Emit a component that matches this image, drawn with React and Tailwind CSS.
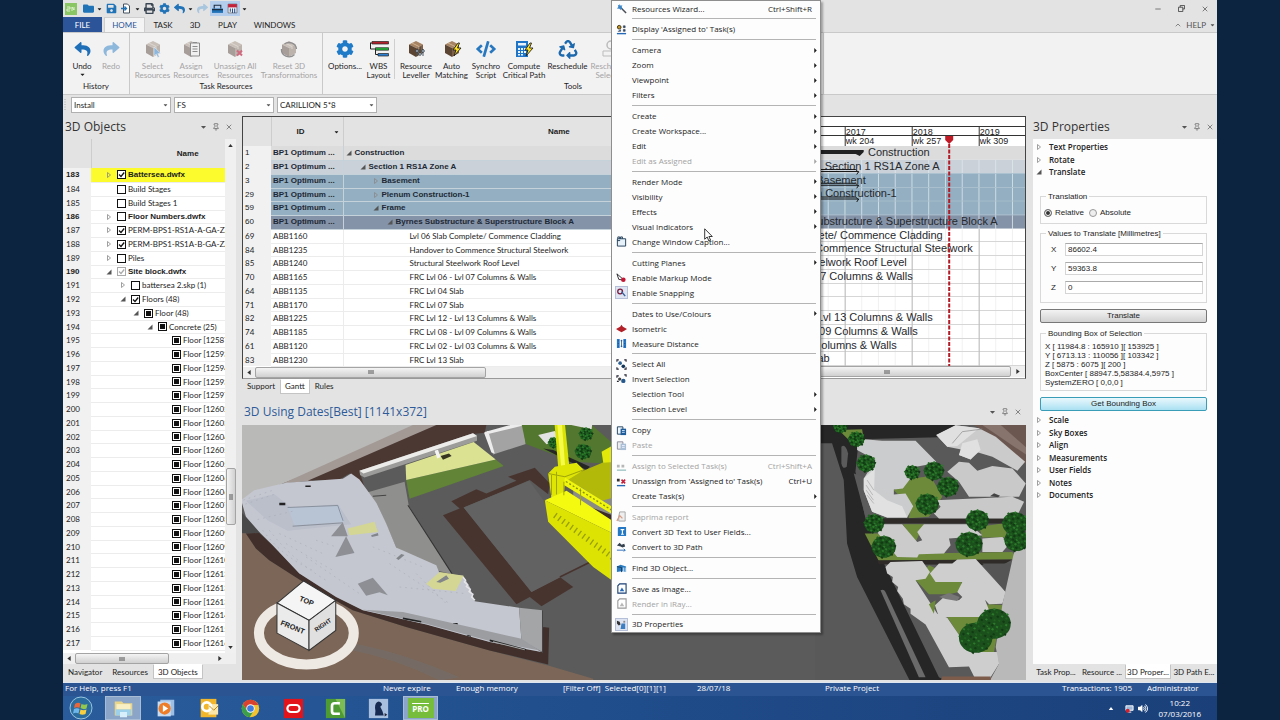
import React from "react";
import { FaReply, FaShare, FaCode, FaRecycle, FaCog, FaFolder, FaSave, FaPrint, FaCaretDown, FaVolumeUp } from "react-icons/fa";
import { X, Pin, Minus, ChevronUp } from "lucide-react";

const UI = "font-['Open_Sans','Noto_Sans',sans-serif]";
const COMPACT = "font-['Lato','Open_Sans',sans-serif]";
const GRID = "font-['Liberation_Sans',Arial,sans-serif]";
const GRID_ROW = COMPACT;

/* ---------- small drawings ---------- */

function Cube({ overlay, faded = true }) {
  return (
    <svg viewBox="0 0 20 18" className="h-[18px] w-5">
      <path d="M3 4.500 10 1l7 3.500-7 3.500z" fill={faded ? "#c9c0ba" : "#a58363"} />
      <path d="M3 4.500 10 8v9l-7-4z" fill={faded ? "#a89e99" : "#5c4432"} />
      <path d="M17 4.500 10 8v9l7-4z" fill={faded ? "#bcb3ad" : "#7d6047"} />
      <path d="M6 3l7 3.500v2.500" fill="none" stroke={faded ? "#ddd6d0" : "#d0b391"} strokeWidth="1" />
      {overlay}
    </svg>
  );
}

const cursorOverlay = <path d="M11 7v9l2.200-2 1.600 3.500 1.500-.7-1.500-3.300h3z" fill="#8db6dd" stroke="#f2f2f2" strokeWidth=".5" />;
const clipOverlay = (
  <g stroke="#8c8c8c" strokeWidth="1">
    <path d="M9.500 3h9v13h-9z" fill="#f0f0f0" />
    <path d="M11.500 6.500h5M11.500 9h5M11.500 11.500h5M12 2.500h4" />
  </g>
);
const crossOverlay = <path d="M12 10.500l5 5m0-5l-5 5" stroke="#cf6a80" strokeWidth="2" />;
const rotateOverlay = <path d="M2.500 9a7.500 7 0 0 0 13 5.500M17.500 9a7.500 7 0 0 0-12-5" fill="none" stroke="#8f8f8f" strokeWidth="1.300" />;
const dotsOverlay = (
  <g fill="#dfe8f2" stroke="#21313f" strokeWidth=".8">
    <path d="M11 9v7M14 7v8M17 9v7" />
    <circle cx="11" cy="11" r="1.300" /><circle cx="14" cy="14" r="1.300" /><circle cx="17" cy="11" r="1.300" />
  </g>
);
const Bolt = ({ x }) => <path d={`M${x + 4} 3l-5 7h3l-2 6 7-8h-3.500l2-5z`} fill="#ffe11f" stroke="#222" strokeWidth=".9" />;

const WbsIcon = () => (
  <svg viewBox="0 0 20 18" className="h-[18px] w-5">
    <path d="M1.500 3v6h5M6.500 9v5.500h3M1 3h3" fill="none" stroke="#222" />
    <path d="M3 1.500h16.500v2.500H3z" fill="#b3202c" stroke="#222" strokeWidth=".7" />
    <path d="M6.500 7.700h13v2.500h-13z" fill="#25b33c" stroke="#222" strokeWidth=".7" />
    <path d="M9 13.500h10.500v2.500H9z" fill="#2d7fd0" stroke="#222" strokeWidth=".7" />
  </svg>
);
const CalcBolt = () => (
  <svg viewBox="0 0 20 18" className="h-[18px] w-5">
    <path d="M2 1h12v16H2z" fill="#1f74c7" />
    <path d="M4 3h8v2.500H4z" fill="#e9f3fc" />
    <path d="M4 8h2v2H4zM7 8h2v2H7zM10 8h2v2h-2zM4 11h2v2H4zM7 11h2v2H7zM10 11h2v2h-2zM4 14h2v1.500H4zM7 14h2v1.500H7z" fill="#e9f3fc" />
    <Bolt x={12} />
  </svg>
);

const MENU_ICONS = {
  wand: <><path d="M5 5l6 6" stroke="#4a4f58" strokeWidth="1.600" /><path d="M4 1l1 2 2-.5-1 2 1.500 1.500-2 .2L5 8 3.800 6.200 1 6l1.500-1.600L2 2l1.500.8z" fill="#3b86c8" /></>,
  assigned: <><circle cx="3.500" cy="3.500" r="2" fill="#c49a2a" stroke="#3b2c0d" /><path d="M5 6v2H2M8 2h2v2H8zM8 6h2v2H8z" fill="#245a9c" stroke="#333" strokeWidth=".6" /><path d="M1 10.500h10" stroke="#2568b8" strokeWidth="1.500" /></>,
  caption: <path d="M1.500 3h9v8h-9zM2 3V1h2v2M5 3V1h2v2M1.500 5h3" fill="#e6f1fa" stroke="#1e3954" />,
  markup: <><path d="M1 2l8 7-6-1z" fill="#fff" stroke="#26262c" /><circle cx="8" cy="8.500" r="2.500" fill="#c31835" /></>,
  snap: <><circle cx="4.500" cy="5" r="2.600" fill="none" stroke="#7b1b3c" strokeWidth="1.400" /><path d="M6 5l4 5" stroke="#38639c" strokeWidth="1.600" /></>,
  iso: <path d="M0 6.500l3-1.500 1.500-1L6 2l1.500 2L9 5l3 1.500-3 2L6 10 3 8.500z" fill="#b32028" />,
  measure: <><path d="M1 1h3v10H1zM8 1h3v10H8z" fill="#2878c8" /><path d="M6 2v8M5 3h2M5 9h2M2 3h1M2 6h1M2 9h1M9 3h1M9 6h1M9 9h1" stroke="#1d456d" strokeWidth=".8" /></>,
  select: <><path d="M1 3V1h2M9 1h2v2M11 9v2H9M3 11H1V9" fill="none" stroke="#223" strokeWidth="1.200" /><circle cx="4.500" cy="4.500" r="2" fill="#2d5e8e" /><circle cx="8" cy="8" r="2" fill="#123456" /></>,
  invert: <><path d="M1 4V2h2M9 1h2v2M1 8h2" fill="none" stroke="#223" strokeWidth="1.200" /><circle cx="4" cy="5.500" r="1.800" fill="#444" /><circle cx="8" cy="7.500" r="2.400" fill="#25588d" /></>,
  copy: <><path d="M1.500 2h6v8h-6z" fill="#eef5fc" stroke="#1c3c5c" /><path d="M5 4h6v7H5z" fill="#1e5c9c" /><path d="M6.500 6h3M6.500 8h3" stroke="#cfe3f5" /></>,
  paste: <><path d="M1.500 2h6v8h-6z" fill="#eee" stroke="#889" /><path d="M5 4h6v7H5z" fill="#a8bfd6" /><path d="M6.500 6h3M6.500 8h3" stroke="#eef" /></>,
  assign: <><path d="M1 4h3v3H1zM6 4h3v3H6z" fill="#b7b7b7" /><path d="M1 10h10" stroke="#9fc3c3" strokeWidth="1.500" /></>,
  unassign: <><path d="M1 3h3v3H1z" fill="#333" /><path d="M6 4l4 4m0-4l-4 4" stroke="#c4203c" strokeWidth="1.700" /><path d="M1 10.500h9" stroke="#2568b8" strokeWidth="1.500" /></>,
  report: <><path d="M4 1h6v10H3V6z" fill="#eee" stroke="#a4a4a4" /><path d="M1 11l3-6 3 3" fill="none" stroke="#d79b82" strokeWidth="1.400" /></>,
  text: <><path d="M3 1h8v10H2V2z" fill="#2478c4" /><path d="M5 4h4M7 4v5M5.500 9h3" stroke="#fff" strokeWidth="1.300" /></>,
  path: <><path d="M1 5l3-3 2 2 3-1 1 3-3 1-2-1z" fill="#35424f" /><path d="M1 10h9l-1.500-1.500M10 10l-1.500 1.500" stroke="#2568b8" fill="none" /></>,
  find: <><path d="M1 5l4-2 6 2v6l-5-1-5 1z" fill="#2a7abf" /><path d="M1 5l5 1v5" stroke="#163c5e" fill="none" /><path d="M8 6v5M10 6v5" stroke="#d5e8f8" /></>,
  image: <><path d="M4 1h7v10H2V3z" fill="#fff" stroke="#1b3f74" strokeWidth="1.200" /><path d="M4 9l2.500-4L9 9z" fill="#2568b8" /></>,
  imageOff: <><path d="M4 1h7v10H2V3z" fill="#fff" stroke="#999" strokeWidth="1.200" /><path d="M4 9l2.500-4L9 9z" fill="#b8b8b8" /></>,
  props: <><path d="M1 2l3 1 1 3-2 1-2-2z" fill="#333" /><path d="M6 5h4v6H5z" fill="#3c7dc4" /><path d="M8 2h2v2H8z" fill="#888" /></>,
};

/* ---------- context menu ---------- */

const MENU = [
  [["Resources Wizard...", { k: "Ctrl+Shift+R", i: "wand" }]],
  [["Display 'Assigned to' Task(s)", { i: "assigned" }]],
  [["Camera", { s: 1 }], ["Zoom", { s: 1 }], ["Viewpoint", { s: 1 }], ["Filters", { s: 1 }]],
  [["Create", { s: 1 }], ["Create Workspace...", { s: 1 }], ["Edit", { s: 1 }], ["Edit as Assigned", { s: 1, d: 1 }]],
  [["Render Mode", { s: 1 }], ["Visibility", { s: 1 }], ["Effects", { s: 1 }], ["Visual Indicators", { s: 1 }], ["Change Window Caption...", { i: "caption" }]],
  [["Cutting Planes", { s: 1 }], ["Enable Markup Mode", { i: "markup" }], ["Enable Snapping", { i: "snap", on: 1 }]],
  [["Dates to Use/Colours", { s: 1 }], ["Isometric", { i: "iso" }], ["Measure Distance", { i: "measure" }]],
  [["Select All", { i: "select" }], ["Invert Selection", { i: "invert" }], ["Selection Tool", { s: 1 }], ["Selection Level", { s: 1 }]],
  [["Copy", { i: "copy" }], ["Paste", { i: "paste", d: 1 }]],
  [["Assign to Selected Task(s)", { i: "assign", k: "Ctrl+Shift+A", d: 1 }], ["Unassign from 'Assigned to' Task(s)", { i: "unassign", k: "Ctrl+U" }], ["Create Task(s)", { s: 1 }]],
  [["Saprima report", { i: "report", d: 1 }], ["Convert 3D Text to User Fields...", { i: "text" }], ["Convert to 3D Path", { i: "path" }]],
  [["Find 3D Object...", { i: "find" }]],
  [["Save as image...", { i: "image" }], ["Render in iRay...", { i: "imageOff", d: 1 }]],
  [["3D Properties", { i: "props", on: 1 }]],
];

function ContextMenu() {
  return (
    <div role="menu" className="absolute left-[611px] top-0 z-10 flex h-[633px] w-[210px] flex-col border border-[#8e8e8e] bg-[#fdfdfd] shadow-[2px_2px_2px_rgba(0,0,0,0.3)]">
      {MENU.map((group, g) => (
        <React.Fragment key={g}>
          {g > 0 && (
            <div role="separator" className="flex flex-1 items-center pl-5 pr-1">
              <div className="h-px w-full bg-[#b4b4b4]" />
            </div>
          )}
          {group.map(([label, o]) => (
            <button key={label} role="menuitem" disabled={!!o.d} className={"flex h-[15px] items-center pl-[3px] pr-[3px] text-left text-[8px] leading-none " + (o.d ? "text-[#a3a3a3]" : "text-[#1c1c1c]")}>
              <span className={"mr-1 flex h-[13px] w-[13px] items-center justify-center " + (o.on ? "border border-[#b5bfd8] bg-[#dfe4f2]" : "")}>
                {o.i && <svg viewBox="0 0 12 12" className="h-[11px] w-[11px]">{MENU_ICONS[o.i]}</svg>}
              </span>
              <span className="flex-1 whitespace-nowrap">{label}</span>
              {o.k && <span className="pr-[5px]">{o.k}</span>}
              {o.s && <svg viewBox="0 0 3 6" className="h-[5px] w-[3px]"><path d="M0 0l3 3-3 3z" fill="currentColor" /></svg>}
            </button>
          ))}
        </React.Fragment>
      ))}
      <svg viewBox="0 0 9 14" className="absolute left-[92px] top-[227px] h-[14px] w-[9px]">
        <path d="M.7.8v10.400l2.500-2.200 1.700 4 1.700-.8-1.700-3.700h3.400z" fill="#fff" stroke="#222" strokeWidth=".9" />
      </svg>
    </div>
  );
}

/* ---------- ribbon ---------- */

function RibbonButton({ icon, lines, width, disabled, drop }) {
  return (
    <button disabled={disabled} className={`flex ${width} flex-col items-center pt-[7px] text-[8px] leading-[9px] ${COMPACT} ` + (disabled ? "text-[#a4a4a4]" : "text-[#1e1e1e]")}>
      <span className="mb-1 flex h-[18px] items-center">{icon}</span>
      {lines.map((l) => <span key={l} className="whitespace-nowrap">{l}</span>)}
      {drop && <FaCaretDown className="h-[7px] w-[5px]" />}
    </button>
  );
}

function Group({ label, width, children }) {
  return (
    <div className={`flex ${width} flex-col border-r border-[#c9c9c9]`}>
      <div className="flex flex-1 pl-1">{children}</div>
      <div className={"h-[14px] text-center text-[8px] leading-[13px] " + COMPACT}>{label}</div>
    </div>
  );
}

function QuickBar() {
  const c = "h-[11px] w-[11px] text-[#2173b8]";
  return (
    <div className="flex h-[17px] items-center">
      <svg viewBox="0 0 12 12" className="ml-0.5 h-3 w-3"><path d="M0 0h12v12H0z" fill="#8bc665" /><path d="M2 4h3v2H2v2h3M7 8V4l2 3V4" stroke="#dff0d2" fill="none" /></svg>
      <FaFolder className={c + " ml-[6px]"} />
      <FaCaretDown className="ml-[3px] h-[6px] w-[5px]" />
      <FaSave className={c + " ml-[4px]"} />
      <svg viewBox="0 0 10 11" className="ml-[4px] h-[11px] w-[10px]"><path d="M2.500 1h4l2 2v7h-6z" fill="#fff" stroke="#44515e" /><path d="M0 5.500h5M3.500 3.500l2 2-2 2" stroke="#2173b8" fill="none" strokeWidth="1.300" /></svg>
      <FaCaretDown className="ml-[4px] h-[6px] w-[5px]" />
      <FaPrint className="ml-[4px] h-[11px] w-[11px] text-[#3a4653]" />
      <FaCog className={c + " ml-[4px]"} />
      <FaReply className={c + " ml-[4px]"} />
      <FaCaretDown className="ml-[3px] h-[6px] w-[5px]" />
      <FaShare className="ml-[4px] h-[11px] w-[11px] text-[#a9c6df]" />
      <span className="ml-[2px] flex h-[15px] w-[30px] items-center justify-around bg-[#b5cdec]">
        <svg viewBox="0 0 10 10" className="h-[11px] w-[11px]"><path d="M0 5h10v4H0z" fill="#2173b8" /><path d="M2 5V2h6v3M0 6h10" stroke="#1b2d41" fill="none" /></svg>
        <svg viewBox="0 0 10 10" className="h-[11px] w-[11px]"><path d="M1 1h8v8H1z" fill="#f4f6fa" stroke="#555" strokeWidth=".6" /><path d="M1 1h8v3H1z" fill="#c3223b" /><path d="M3 5v3M5 5v4M7 5v4" stroke="#2a4f88" /></svg>
      </span>
      <FaCaretDown className="ml-0.5 h-[6px] w-[5px]" />
      <div className="ml-auto flex items-center gap-4 pr-2 text-[#444]">
        <Minus className="h-[8px] w-[8px]" />
        <svg viewBox="0 0 8 8" className="h-[7px] w-[7px]"><path d="M2.500 2.500v-2h5v4h-2M.5 2.500h5v5h-5z" fill="none" stroke="#444" /></svg>
        <X className="h-[8px] w-[8px]" />
      </div>
    </div>
  );
}

function Ribbon() {
  const tab = "flex items-center justify-center text-[8px] leading-none " + COMPACT;
  return (
    <header>
      <QuickBar />
      <nav className="flex h-[15px] text-[#222]">
        <button className={tab + " w-[39px] bg-[#2b5499] text-white"}>FILE</button>
        <button className={tab + " ml-[2px] w-[41px] border border-b-0 border-[#cfcfcf] bg-[#f4f4f4] text-[#2b5499]"}>HOME</button>
        <button className={tab + " w-[36px]"}>TASK</button>
        <button className={tab + " w-[28px]"}>3D</button>
        <button className={tab + " w-[37px]"}>PLAY</button>
        <button className={tab + " w-[57px]"}>WINDOWS</button>
        <button className={tab + " ml-auto gap-1 pr-0.5 text-[#555]"}><ChevronUp className="h-[8px] w-[8px]" />HELP<FaCaretDown className="h-[6px] w-[5px]" /></button>
      </nav>
      <div className="flex h-[63px] overflow-hidden border-y border-[#c9c9c9] bg-[#f3f2f3]">
        <Group label="History" width="w-[67px]">
          <RibbonButton width="w-[30px]" lines={["Undo"]} drop icon={<FaReply className="h-4 w-[19px] text-[#1f6fb8]" />} />
          <RibbonButton width="w-[28px]" lines={["Redo"]} disabled icon={<FaShare className="h-4 w-[19px] text-[#8db8dc]" />} />
        </Group>
        <Group label="Task Resources" width="w-[193px]">
          <RibbonButton width="w-[37px]" lines={["Select", "Resources"]} disabled icon={<Cube overlay={cursorOverlay} />} />
          <RibbonButton width="w-[40px]" lines={["Assign", "Resources"]} disabled icon={<Cube overlay={clipOverlay} />} />
          <RibbonButton width="w-[48px]" lines={["Unassign All", "Resources"]} disabled icon={<Cube overlay={crossOverlay} />} />
          <RibbonButton width="w-[60px]" lines={["Reset 3D", "Transformations"]} disabled icon={<Cube overlay={rotateOverlay} />} />
        </Group>
        <Group label="Tools" width="w-[501px]">
          <RibbonButton width="w-[36px]" lines={["Options..."]} icon={<FaCog className="h-[18px] w-[18px] text-[#1f7ac8]" />} />
          <RibbonButton width="w-[31px]" lines={["WBS", "Layout"]} icon={<WbsIcon />} />
          <div className="mt-[6px] h-10 w-px bg-[#cfcfcf]" />
          <div className="w-[4px]" />
          <RibbonButton width="w-[34px]" lines={["Resource", "Leveller"]} icon={<Cube faded={false} overlay={dotsOverlay} />} />
          <RibbonButton width="w-[37px]" lines={["Auto", "Matching"]} icon={<Cube faded={false} overlay={<Bolt x={12} />} />} />
          <RibbonButton width="w-[32px]" lines={["Synchro", "Script"]} icon={<FaCode className="h-[18px] w-5 text-[#2878c0]" />} />
          <RibbonButton width="w-[44px]" lines={["Compute", "Critical Path"]} icon={<CalcBolt />} />
          <RibbonButton width="w-[43px]" lines={["Reschedule"]} icon={<FaRecycle className="h-[19px] w-[20px] text-[#1d69ad]" />} />
          <RibbonButton width="w-[43px]" lines={["Reschedule", "Selected"]} disabled icon={<svg viewBox="0 0 20 18" className="h-[18px] w-5"><circle cx="10" cy="5" r="4" fill="none" stroke="#bbb" strokeWidth="1.500" /><path d="M2 11h16v5H2z" fill="none" stroke="#bbb" /></svg>} />
        </Group>
      </div>
      <div className="flex h-5 items-center gap-[3px] pl-px">
        <svg viewBox="0 0 3 12" className="mr-px h-3 w-[3px]"><path d="M1 0v12" stroke="#aaa" strokeDasharray="1 1.500" /></svg>
        {[["Discipline", "Install"], ["Link type", "FS"], ["Calendar", "CARILLION 5*8"]].map(([name, v]) => (
          <label key={name} className="relative flex">
            <select aria-label={name} className={"h-4 w-[100px] appearance-none border border-[#b0b0b0] bg-white pl-[2px] text-[8px] leading-none " + COMPACT}>
              <option>{v}</option>
            </select>
            <FaCaretDown className="pointer-events-none absolute right-[3px] top-[5px] h-[6px] w-[5px] text-[#555]" />
          </label>
        ))}
      </div>
    </header>
  );
}

/* ---------- shared parts ---------- */

const PanelButtons = () => (
  <span className="flex items-center gap-[5px] text-[#555]">
    <FaCaretDown className="h-[8px] w-[7px]" />
    <Pin className="h-[8px] w-[8px]" />
    <X className="h-[8px] w-[8px]" />
  </span>
);

function Twisty({ open }) {
  return open ? (
    <svg viewBox="0 0 6 6" className="h-[6px] w-[6px] shrink-0"><path d="M5.500.5v5h-5z" fill="#555" /></svg>
  ) : (
    <svg viewBox="0 0 6 6" className="h-[6px] w-[6px] shrink-0"><path d="M1.500.5v5l3-2.500z" fill="none" stroke="#888" strokeWidth=".8" /></svg>
  );
}

function HScroll({ thumb, pad = "" }) {
  return (
    <div className={"flex h-[11px] items-center justify-between bg-[#efefef] " + pad}>
      <svg viewBox="0 0 4 6" className="mx-[4px] h-[5px] w-[4px]"><path d="M4 0v6L0 3z" fill="#333" /></svg>
      <div className="flex h-full flex-1">
        <div className={`flex h-full ${thumb} items-center justify-center rounded-xs border border-[#a4a4a4] bg-linear-to-b from-[#f4f4f4] to-[#d0d0d0]`}>
          <svg viewBox="0 0 6 4" className="h-1 w-[6px]"><path d="M1 0v4M3 0v4M5 0v4" stroke="#555" /></svg>
        </div>
      </div>
      <svg viewBox="0 0 4 6" className="mx-[5px] h-[5px] w-[4px]"><path d="M0 0v6l4-3z" fill="#333" /></svg>
    </div>
  );
}

/* ---------- 3D Objects ---------- */

const FLOORS = ["12587", "12593", "12594", "12593", "12597", "12602", "12603", "12604", "12605", "12605", "12606", "12606", "12607", "12608", "12609", "12609", "12610", "12613", "12613", "12613", "12614", "12615", "12616"];
const TREE = [
  [183, "Battersea.dwfx", 0, "c", "x", true],
  [184, "Build Stages", 0, "", ""],
  [185, "Build Stages 1", 0, "", ""],
  [186, "Floor Numbers.dwfx", 0, "", "x", true],
  [187, "PERM-BPS1-RS1A-A-GA-ZZ-", 0, "c", "x"],
  [188, "PERM-BPS1-RS1A-B-GA-ZZ-", 0, "c", "x"],
  [189, "Piles", 0, "", "x"],
  [190, "Site block.dwfx", 0, "g", "o", true],
  [191, "battersea 2.skp (1)", 1, "", "x"],
  [192, "Floors (48)", 1, "c", "o"],
  [193, "Floor (48)", 2, "f", "o"],
  [194, "Concrete (25)", 3, "f", "o"],
  ...FLOORS.map((f, i) => [195 + i, "Floor [" + f, 4, "f", ""]),
];
const INDENT = ["pl-[15px]", "pl-[29px]", "pl-[42px]", "pl-[56px]", "pl-[70px]"];

function Check({ id, state }) {
  return (
    <span className="relative mx-[2px] ml-[5px] flex h-[9px] w-[9px] shrink-0">
      <input id={id} type="checkbox" defaultChecked={state !== ""} className={"h-[9px] w-[9px] appearance-none border bg-white " + (state === "g" ? "border-[#aaa]" : "border-[#111]")} />
      <svg viewBox="0 0 9 9" className="pointer-events-none absolute left-0 top-0 h-[9px] w-[9px]">
        {(state === "c" || state === "g") && <path d="M2 4.500l2 2 3.200-4" fill="none" stroke={state === "g" ? "#aaa" : "#111"} strokeWidth="1.300" />}
        {state === "f" && <path d="M2 2h5v5H2z" fill="#111" />}
      </svg>
    </span>
  );
}

function ObjectsPanel() {
  return (
    <aside className="flex w-[173px] shrink-0 flex-col">
      <div className="flex h-6 items-center justify-between pl-0.5 pr-[3px]">
        <h2 className="text-[12px] text-[#333]">3D Objects</h2>
        <PanelButtons />
      </div>
      <div className="flex flex-1">
        <div className="w-[162px] overflow-hidden bg-white">
          <table className={"w-full table-fixed border-collapse text-[8px] leading-none " + GRID}>
            <colgroup><col className="w-[28px]" /><col /></colgroup>
            <thead>
              <tr className="h-[29px] bg-[#e3e3e3]">
                <td className="border-r border-[#cdcdcd] p-0" />
                <th className="p-0 pl-[59px] text-center">Name</th>
              </tr>
            </thead>
            <tbody>
              {TREE.map(([n, name, lvl, chk, tw, bold], i) => (
                <tr key={n} className={(i % 4 === 3 ? "h-[13px] " : "h-[14px] ") + (bold ? "font-bold" : GRID_ROW)}>
                  <td className="bg-[#f1f1f1] p-0 pl-[3px]">{n}</td>
                  <td className={"overflow-hidden border-b border-[#ececec] p-0 " + (i === 0 ? "bg-[#fbfb2e]" : "")}>
                    <div className={"flex items-center " + INDENT[lvl]}>
                      <span className="flex w-[6px] shrink-0">{tw && <Twisty open={tw === "o"} />}</span>
                      <Check id={"o" + n} state={chk} />
                      <label htmlFor={"o" + n} className="whitespace-nowrap">{name}</label>
                    </div>
                  </td>
                </tr>
              ))}
            </tbody>
          </table>
        </div>
        <div className="flex w-[11px] flex-col items-center bg-[#f0f0f0]">
          <svg viewBox="0 0 6 4" className="mt-[5px] h-[3px] w-[5px]"><path d="M0 4h6L3 0z" fill="#333" /></svg>
          <div className="flex-[321]" />
          <div className="flex h-[57px] w-[10px] items-center justify-center rounded-xs border border-[#a4a4a4] bg-linear-to-r from-[#f4f4f4] to-[#d0d0d0]">
            <svg viewBox="0 0 4 6" className="h-[6px] w-1"><path d="M0 1h4M0 3h4M0 5h4" stroke="#555" /></svg>
          </div>
          <div className="flex-[121]" />
          <svg viewBox="0 0 6 4" className="mb-1 h-[3px] w-[5px]"><path d="M0 0h6L3 4z" fill="#333" /></svg>
        </div>
      </div>
      <HScroll thumb="w-[68%]" pad="pr-[9px]" />
      <Tabs items={["Navigator", "Resources", "3D Objects"]} active={2} />
    </aside>
  );
}

function Tabs({ items, active, fill }) {
  return (
    <div role="tablist" className={"flex h-[18px] items-start text-[8px] leading-none text-[#222] " + COMPACT}>
      {items.map((t, i) => (
        <button key={t} role="tab" aria-selected={i === active} className={(fill ? "flex-1 " : "px-1 ") + "h-[15px] whitespace-nowrap border " + (i === active ? "border-[#c4c4c4] border-t-white bg-white" : "border-transparent")}>{t}</button>
      ))}
    </div>
  );
}

/* ---------- Gantt ---------- */

const TASKS = [
  [1, "BP1 Optimum ...", "Construction", 0, "o", "bg-[#dcdcdc]"],
  [2, "BP1 Optimum ...", "Section 1 RS1A Zone A", 1, "o", "bg-[#cad1d8]"],
  [3, "BP1 Optimum ...", "Basement", 2, "x", "bg-[#93afc1]"],
  [29, "BP1 Optimum ...", "Plenum Construction-1", 2, "x", "bg-[#93afc1]"],
  [59, "BP1 Optimum ...", "Frame", 2, "o", "bg-[#93afc1]"],
  [60, "BP1 Optimum ...", "Byrnes Substructure & Superstructure Block A", 3, "o", "bg-[#8593a8]"],
  [69, "ABB1160", "Lvl 06 Slab Complete/ Commence Cladding"],
  [84, "ABB1235", "Handover to Commence Structural Steelwork"],
  [85, "ABB1240", "Structural Steelwork Roof Level"],
  [70, "ABB1165", "FRC Lvl 06 - Lvl 07 Columns & Walls"],
  [64, "ABB1135", "FRC Lvl 04 Slab"],
  [71, "ABB1170", "FRC Lvl 07 Slab"],
  [82, "ABB1225", "FRC Lvl 12 - Lvl 13 Columns & Walls"],
  [74, "ABB1185", "FRC Lvl 08 - Lvl 09 Columns & Walls"],
  [61, "ABB1120", "FRC Lvl 02 - Lvl 03 Columns & Walls"],
  [83, "ABB1230", "FRC Lvl 13 Slab"],
];
const TASK_INDENT = ["pl-[2px]", "pl-[16px]", "pl-[29px]", "pl-[43px]", "pl-[57px]"];
const CHART_LABELS = [
  [929, "Construction"], [939, "Section 1 RS1A Zone A"], [865, "Basement"], [896, "Plenum Construction-1"], null,
  [997, "Byrnes Substructure & Superstructure Block A"], [942, "Lvl 06 Slab Complete/ Commence Cladding"],
  [972, "Handover to Commence Structural Steelwork"], [906, "Structural Steelwork Roof Level"], [912, "FRC Lvl 06 - Lvl 07 Columns & Walls"],
  null, null, [932, "FRC Lvl 12 - Lvl 13 Columns & Walls"], [917, "FRC Lvl 08 - Lvl 09 Columns & Walls"], [896, "FRC Lvl 02 - Lvl 03 Columns & Walls"], [829, "FRC Lvl 13 Slab"],
];
const ROW_FILL = ["#dcdcdc", "#cad1d8", "#93afc1", "#93afc1", "#93afc1", "#8593a8"];

function Chart() {
  const rowY = (i) => 146 + i * 13.75;
  const months = Array.from({ length: 16 }, (_, i) => 760.5 + i * 16.75);
  return (
    <svg viewBox="751 117 273 249" preserveAspectRatio="xMaxYMin meet" className="block h-[249px] w-full bg-white" fontFamily="'Liberation Sans', Arial, sans-serif">
      {ROW_FILL.map((f, i) => <rect key={i} x="740" y={rowY(i)} width="290" height="13.800" fill={f} />)}
      {months.map((x) => <path key={x} d={`M${x} 160v69`} stroke="#dfe8ee" strokeWidth=".8" />)}
      {months.map((x) => <path key={"b" + x} d={`M${x} 229v137`} stroke="#eeeeee" strokeWidth=".8" />)}
      <path d="M740 173.500h290M740 187.500h290M740 201h290M740 215h290" stroke="#a9c0ce" strokeWidth=".8" />
      {TASKS.map((_, i) => i > 5 && <path key={i} d={`M740 ${Math.round(rowY(i + 1)) - 0.5}h290`} stroke="#d6d6d6" />)}
      <path d="M844.500 229v137M911.500 229v137M978.500 229v137" stroke="#bcbcbc" />
      <path d="M740 126.500h290M740 135.500h290M844.500 127v19M911.500 127v19M978.500 127v19" stroke="#333" />
      <g fontSize="9" fill="#222">
        {[["2017", "wk 204", 845], ["2018", "wk 257", 912], ["2019", "wk 309", 979]].map(([y, w, x]) => (
          <g key={y}><text x={x} y="135">{y}</text><text x={x} y="144">{w}</text></g>
        ))}
      </g>
      <path d="M760 150h103v2l-4 4-4-2h-95z" fill="#222" />
      {[2, 3, 4].map((i) => <path key={i} d={`M760 ${rowY(i) - 2}h98l-2 3M760 ${rowY(i) - 4}h95l3 3`} fill="none" stroke="#1a1a1a" />)}
      <g fontSize="11" fill="#26292e" textAnchor="end">
        {CHART_LABELS.map((l, i) => l && <text key={i} x={l[0]} y={rowY(i) + 10}>{l[1]}</text>)}
      </g>
      <path d="M944.500 136h8v4l-4 4-4-4z" fill="#c01a26" />
      <path d="M948.500 144v222" stroke="#b31a26" strokeWidth="2" strokeDasharray="4 1.500" />
    </svg>
  );
}

function GanttPanel() {
  return (
    <section className="mt-px border border-[#444] border-b-[#999] bg-white">
      <div className="flex">
        <div className="w-[65%] border-r border-[#777]">
          <table className={"w-full table-fixed border-collapse text-[8px] leading-none " + GRID}>
            <colgroup><col className="w-[28px]" /><col className="w-[72px]" /><col /></colgroup>
            <thead>
              <tr className="h-[29px] bg-[#e3e3e3]">
                <td className="border-r border-[#cdcdcd] p-0" />
                <th className="border-r border-[#cdcdcd] p-0"><div className="flex items-center pl-[25px] pr-1"><span className="flex-1 text-left">ID</span><FaCaretDown className="h-[6px] w-[5px]" /></div></th>
                <th className="p-0 pl-[24px]">Name</th>
              </tr>
            </thead>
            <tbody>
              {TASKS.map(([n, id, name, lvl = 4, tw, bg], i) => (
                <tr key={n} className={(i % 4 === 3 ? "h-[13px] " : "h-[14px] ") + (bg ? "" : GRID_ROW)}>
                  <td className="bg-[#f1f1f1] p-0 pl-[2px]">{n}</td>
                  <td className={"overflow-hidden whitespace-nowrap border-b border-r p-0 pl-[2px] " + (bg ? bg + " border-[#c6d2da] font-bold text-[#1e2936]" : "border-[#ececec]")}>{id}</td>
                  <td className={"border-b p-0 " + (bg ? bg + " border-[#c6d2da] font-bold text-[#1e2936]" : "border-[#ececec]")}>
                    <div className={"flex items-center whitespace-nowrap " + TASK_INDENT[lvl]}>
                      <span className="mr-[3px] flex w-[6px]">{tw && <Twisty open={tw === "o"} />}</span>{name}
                    </div>
                  </td>
                </tr>
              ))}
            </tbody>
          </table>
          <HScroll thumb="w-[48%]" />
        </div>
        <div className="min-w-0 flex-1">
          <Chart />
          <HScroll thumb="w-full" />
        </div>
      </div>
    </section>
  );
}

/* ---------- 3D view ---------- */

function Tree({ x, y, r = 34 }) {
  const dots = Array.from({ length: 42 }, (_, i) => {
    const a = i * 2.4;
    const d = Math.sqrt(i / 42) * r * 1.02;
    return [x + Math.cos(a) * d, y + Math.sin(a) * d * 0.92, i % 3];
  });
  return (
    <g>
      <ellipse cx={x} cy={y} rx={r} ry={r * 0.9} fill="#1b4f1c" />
      {dots.map(([cx, cy, k], i) => <path key={i} d={`M${cx - 4} ${cy}l4-4 5 3-3 5z`} fill={["#2c7a2b", "#123a14", "#1f611f"][k]} />)}
    </g>
  );
}

function Scene() {
  return (
    <svg viewBox="6 15 2352 765" preserveAspectRatio="xMidYMid slice" className="mb-[2px] block min-h-[250px] w-full flex-1" fontFamily="'Liberation Sans', Arial, sans-serif">
      <rect x="0" y="0" width="2400" height="800" fill="#5b5b5b" />
      <path d="M0 0L620 0 545 30 130 190 0 245Z" fill="#b9b9b7" />
      <path d="M520 15L600 15 215 182 130 190Z" fill="#a39a96" />
      <path d="M590 15L740 15 735 38 700 42 360 155 380 215 330 160 300 178 205 182Z" fill="#4b3833" />
      <path d="M0 338L20 340 50 385 90 420 200 490 340 570 500 620 750 690 925 735 1060 775 1060 800 0 800Z" fill="#7c6657" />
      <path d="M350 670Q500 700 660 770L600 780Q470 715 340 690Z" fill="#746e6a" opacity=".7" />
      <path d="M20 340L60 338 100 375 180 460 290 530 370 570 560 612 750 665 905 695 910 620 928 622 925 732 750 690 500 620 340 570 200 490 90 420 50 385Z" fill="#402f2a" />

      <path d="M360 152L700 40 712 48 712 62 375 172 362 165Z" fill="#9c9c9a" />
      <path d="M360 152L700 40 712 48 372 160Z" fill="#ececea" />
      <path d="M735 38L850 15 858 72 760 103Z" fill="#a3a3a3" />
      <path d="M733 38L745 32 765 100 755 97ZM735 36L830 10 856 15 745 42Z" fill="#ececec" />
      <path d="M845 10L1050 10 1118 70 1095 130 1000 125 858 72Z" fill="#54772f" />
      <path d="M895 45L945 33 962 55 920 73ZM980 12L1057 12 1055 28Z" fill="#e2e2e2" />
      <path d="M910 85L940 90 1050 140 1040 150Z" fill="#252525" />
      <path d="M500 180L768 118 792 138 510 236Z" fill="#618437" />
      <path d="M498 135L702 66 768 118 500 180Z" fill="#dbe393" />
      <path d="M585 92l10-3 8 22-10 4z" fill="#f4f4f4" /><path d="M603 108l25-8 8 8-26 11z" fill="#37351f" />
      <path d="M380 218L495 185 508 258 637 462 590 450 470 382 412 250Z" fill="#8f8f8d" />
      <path d="M400 228l40-3" stroke="#444" strokeWidth="3" />
      <path d="M505 255L637 460" stroke="#333" strokeWidth="3" />
      <path d="M635 243L710 207 740 220 830 182 805 170 885 143 930 190 925 222 870 180 672 262 875 515 960 470 1000 500 905 558 870 530 830 552 610 285 660 265Z" fill="#48342f" />
      <path d="M672 262L868 182 1048 427 875 515Z" fill="#626262" />
      <path d="M960 470L1048 427" stroke="#48342f" strokeWidth="5" />
      <path d="M0 270L20 290 66 338 0 338Z" fill="#494949" />

      <path d="M6 240L45 210 140 188 310 176 335 160 360 178 412 250 440 310 470 382 590 435 600 460 670 466 690 500 705 543 838 562 845 660 905 695 750 665 560 612 370 570 290 530 180 460 100 375 60 335 20 290Z" fill="#c5c7d0" />
      <path d="M20 242L105 222 155 262 295 252 335 312 145 332 85 300Z" fill="#b3b9c7" opacity=".6" />
      <path d="M145 262L300 257 315 305 165 316Z" fill="#b8c3d4" />
      <g stroke="#a9adb9" strokeWidth="2" fill="none" strokeDasharray="5 12">
        <path d="M12 240l90-30M18 252l88-30M55 298l110-26M70 330q60 80 150 120M90 330q70 90 170 150M120 340l130 60M140 370l140 80M200 410l160 110M230 360l60 20M400 380l150 60M480 500l200 20M530 460l90 90M450 430l180 120" />
      </g>
      <path d="M145 262l150-6 16 46M160 318l150-10" stroke="#717985" fill="none" strokeWidth="2" />
      <path d="M275 348L310 306 325 348ZM288 410L320 348 345 398ZM355 490L400 472 445 525 420 516 380 526Z" fill="#8d8f95" />
      <path d="M325 325L405 305 415 335 330 345ZM560 490L600 455 672 466 648 512 580 505Z" fill="#d3d793" />
      <path d="M590 485l30-20 8 10-26 12zM470 415l15-14 10 3-18 15zM395 345l20-7 2 8-20 4z" fill="#82858a" />
      <path d="M120 248h18v7h-18zM198 196h16v5h-16zM680 645l14-4v8zM640 608h14v6h-14z" fill="#222" />
      <path d="M670 470l8 10-4 5 10 8-4 6 12 8-4 7 12 8-4 8 10 10" stroke="#e6e6ea" strokeWidth="4" fill="none" />
      <path d="M838 562L908 570 908 695 845 660Z" fill="#a3a5a7" />
      <path d="M370 568L490 575 700 622 845 655 900 690 750 662 560 610Z" fill="#9b9da1" />
      <path d="M490 594l55 10M750 660l108 28" stroke="#222" strokeWidth="5" /><path d="M760 664l95 24" stroke="#eee" strokeWidth="2" />
      <path d="M908 570v128" stroke="#444" strokeWidth="3" />
      <Tree x={1038} y={42} r={20} /><Tree x={1030} y={95} r={24} /><Tree x={942} y={68} r={16} />

      <path d="M1000 175L1130 200 1130 330 1000 230Z" fill="#8b8b86" />
      <path d="M975 175L1130 110 1130 230 1085 242 1030 205Z" fill="#b3b908" />
      <path d="M1085 95L1130 70 1130 125 1090 128Z" fill="#e2e90a" />
      <path d="M1035 255L1130 290 1130 330 1060 285Z" fill="#3c2b26" />
      <path d="M944 10L975 10 988 135 955 142Z" fill="#dbe206" />
      <path d="M952 10L966 10 976 140 964 142Z" fill="#f6fb4a" />
      <path d="M925 160L945 140 1010 128 1032 150 975 185 972 222 935 236Z" fill="#dfe606" />
      <path d="M975 172L1130 268 1130 290 972 195Z" fill="#f0f70c" />
      <path d="M915 240L980 212 1130 310 1130 345Z" fill="#f4fb10" />
      <path d="M915 240L1130 345 1130 490 1060 440 925 305Z" fill="#dde404" />
      <path d="M935 165v60M950 155v68M972 185v40M1022 205v50M925 160l50 10 55-20" stroke="#a0a60a" strokeWidth="3" fill="none" />
      <path d="M978 184l150 94" stroke="#8b9105" strokeWidth="4" strokeDasharray="6 6" />
      <path d="M945 285l185 135" stroke="#999f08" strokeWidth="18" strokeDasharray="4 11" fill="none" />

      <g transform="translate(1725 -60)">
        <path d="M0 75h640v770H0z" fill="#595959" />
        <path d="M15 75L430 75 370 112 130 118 120 215 150 355 210 500 370 830 400 845 285 845 125 530 95 430 85 240 50 130 15 130Z" fill="#262626" />
        <path d="M78 140q12-10 20 20l-4 40q-12 10-16-10z" fill="#5b5b5b" />
        <path d="M115 220L145 230 150 300 185 345 150 350Z" fill="#5b5b5b" />
        <path d="M195 570q10-5 15 5l120 255h-20z" fill="#6a6a6a" />
        <path d="M475 75L640 75 640 200 560 130Z" fill="#6b5750" />
        <path d="M500 75L555 75 640 150 640 170Z" fill="#87746c" />
        <path d="M70 90L140 88 145 120 110 130ZM235 270L290 235 345 228 380 290 340 350 280 354 285 320ZM148 400L190 400 245 470 310 460 590 455 600 478 190 482ZM262 372L325 372 300 425ZM490 380L575 368 570 412 500 412ZM300 538L340 495 440 540 430 575 400 582 340 582ZM395 650L520 612 560 614 535 755 465 758Z" fill="#6d8a3b" />
        <path d="M165 354L590 354 585 370 165 370ZM185 480L590 478 560 494 190 492Z" fill="#2e2b28" />
        <path d="M362 105L420 76 490 85 540 110 628 185 605 212 530 170 480 155 465 178 430 165 437 148 395 140Z" fill="#cbcbcb" />
        <path d="M362 105L420 76 490 85 425 138 395 140ZM440 130L485 118 495 150 465 178 430 165Z" fill="#e0e0e0" />
        <path d="M410 130l30-35 60-8" stroke="#888" fill="none" strokeWidth="2" />
        <path d="M125 130L145 118 200 122 300 122 362 185 330 195 272 205 285 235 262 265 235 268 235 283 270 280 293 318 275 352 215 352 170 335 145 270 145 235 180 180 125 150Z" fill="#cbcccd" />
        <path d="M145 235L178 205 176 270 215 300 260 318 275 352 215 352 170 335 145 270Z" fill="#e1e1e1" />
        <path d="M155 240l20 30M152 255l20 30M152 270l22 30M155 285l20 25" stroke="#a4a4a4" strokeWidth="2" />
        <path d="M395 215L430 185 460 188 485 212 530 198 590 205 630 250 610 290 460 290 430 245ZM360 300L590 290 625 305 605 345 580 355 370 355 355 340 375 320Z" fill="#c9c9ca" />
        <path d="M523 288l12-9 18 8-6 4z" fill="#444" />
        <path d="M188 372L260 372 305 425 320 420 305 395 325 372 460 372 500 405 460 410 400 415 405 435 385 460 310 462 305 472 245 470 188 400ZM500 415L560 410 580 432 560 455 500 455Z" fill="#cbcbcb" />
        <path d="M210 500L225 485 320 482 343 515 330 535 300 540 365 640 395 652 465 755 548 755 550 790 520 838 480 838 460 798 400 800 330 672 285 640 285 625 265 612 262 595 245 572 248 560 230 545 232 530 215 520Z" fill="#cecece" />
        <path d="M343 520L370 490 410 490 425 478 480 476 570 575 560 610 520 612 508 598 522 635 490 650 370 650 358 615 385 590 430 600 440 590 425 575 440 545 360 545Z" fill="#cecece" />
        <path d="M340 612L360 600 355 640Z" fill="#6d8a3b" />
        <path d="M370 590L400 578 432 590 425 602 390 596Z" fill="#777" />
        <path d="M500 490L590 490 570 575Z" fill="#555" />
        <path d="M595 455L640 440 640 845 520 845 550 790 540 740 560 612Z" fill="#b9b9b9" />
        <path d="M380 828h145v14H375z" fill="#7d5c4c" />
        <Tree x={123} y={118} r={24} /><Tree x={75} y={80} r={20} /><Tree x={152} y={190} r={28} />
        <Tree x={290} y={217} r={22} /><Tree x={355} y={213} r={30} /><Tree x={397} y={260} r={32} /><Tree x={335} y={312} r={34} />
        <Tree x={176} y={370} r={30} /><Tree x={205} y={440} r={36} /><Tree x={485} y={360} r={34} /><Tree x={460} y={432} r={40} />
        <Tree x={598} y={370} r={38} /><Tree x={602} y={420} r={36} /><Tree x={535} y={670} r={50} /><Tree x={480} y={712} r={50} />
      </g>

      <ellipse cx="201" cy="638" rx="142" ry="94" fill="none" stroke="#efe9e4" strokeWidth="30" />
      <path d="M113 548l80-66 96 58-80 60z" fill="#f5f5f5" stroke="#333" strokeWidth="3" />
      <path d="M113 548l96 52v90l-96-52z" fill="#ebebeb" stroke="#333" strokeWidth="3" />
      <path d="M289 540l-80 60v90l80-60z" fill="#e0e0e0" stroke="#333" strokeWidth="3" />
      <g fontSize="22" fontWeight="bold" fill="#222" textAnchor="middle">
        <text transform="translate(199 549) rotate(22)">TOP</text>
        <text transform="translate(157 627) rotate(22)">FRONT</text>
        <text transform="translate(254 619) rotate(-34)" fontSize="18">RIGHT</text>
      </g>
    </svg>
  );
}

/* ---------- 3D Properties ---------- */

function PropLink({ children, open }) {
  return (
    <button className="flex h-3 items-center gap-[7px] pl-[3px] text-[8px] font-semibold leading-none text-[#222] even:h-[13px]">
      <Twisty open={open} />{children}
    </button>
  );
}

function PropertiesPanel() {
  const btn = "ml-[7px] mr-[10px] h-[14px] rounded-xs border text-center text-[8px] leading-none " + GRID;
  const fs = "ml-[7px] mr-[10px] min-w-0 border border-[#d9d9d9] " + GRID;
  const lg = "ml-[5px] px-[2px] text-[8px] leading-[9px]";
  return (
    <aside className="flex w-[184px] shrink-0 flex-col">
      <div className="flex h-6 items-center justify-between pr-[3px]">
        <h2 className="text-[12px] text-[#333]">3D Properties</h2>
        <PanelButtons />
      </div>
      <div className="flex flex-1 flex-col bg-[#fdfdfd] pt-[2px]">
        <div className="flex flex-col">
          <PropLink>Text Properties</PropLink>
          <PropLink>Rotate</PropLink>
          <PropLink open>Translate</PropLink>
        </div>
        <fieldset className={fs + " mt-[14px] h-8"}>
          <legend className={lg}>Translation</legend>
          <div className="flex items-center gap-[3px] pl-[3px] pt-[8px] text-[8px] leading-none">
            <input id="rel" name="mode" type="radio" defaultChecked className="h-2 w-2 appearance-none rounded-full border border-[#777] bg-[#333] shadow-[inset_0_0_0_1px_#fff]" />
            <label htmlFor="rel">Relative</label>
            <input id="abs" name="mode" type="radio" className="ml-0.5 h-2 w-2 appearance-none rounded-full border border-[#999] bg-[#eee]" />
            <label htmlFor="abs">Absolute</label>
          </div>
        </fieldset>
        <fieldset className={fs + " mt-[5px] h-[74px]"}>
          <legend className={lg}>Values to Translate [Millimetres]</legend>
          <div className="flex flex-col gap-[6px] pl-[10px] pr-[3px] pt-[5px]">
            {[["X", "86602.4"], ["Y", "59363.8"], ["Z", "0"]].map(([a, v]) => (
              <div key={a} className="flex items-center text-[8px] leading-none">
                <label htmlFor={"t" + a} className="w-[14px]">{a}</label>
                <input id={"t" + a} defaultValue={v} className="h-[13px] min-w-0 flex-1 border border-[#d5d5d5] border-t-[#aaa] bg-white px-[2px]" />
              </div>
            ))}
          </div>
        </fieldset>
        <button className={btn + " mt-[6px] border-[#777] bg-linear-to-b from-[#f3f3f3] to-[#d2d2d2]"}>Translate</button>
        <fieldset className={fs + " mt-[6px] h-[62px]"}>
          <legend className={lg}>Bounding Box of Selection</legend>
          <div className="pl-[4px] pt-[4px] text-[8px] leading-[9px]">
            <p>X [ 11984.8 : 165910 ][ 153925 ]</p>
            <p>Y [ 6713.13 : 110056 ][ 103342 ]</p>
            <p>Z [ 5875 : 6075 ][ 200 ]</p>
            <p>BoxCenter [ 88947.5,58384.4,5975 ]</p>
            <p>SystemZERO [ 0,0,0 ]</p>
          </div>
        </fieldset>
        <button className={btn + " mb-[3px] mt-[6px] border-[#3a9db8] bg-linear-to-b from-[#eaf8fd] to-[#a9e0f2]"}>Get Bounding Box</button>
        <div className="flex flex-col">
          {["Scale", "Sky Boxes", "Align", "Measurements", "User Fields", "Notes", "Documents"].map((t) => <PropLink key={t}>{t}</PropLink>)}
        </div>
      </div>
      <Tabs fill items={["Task Prop...", "Resource ...", "3D Proper...", "3D Path E..."]} active={2} />
    </aside>
  );
}

/* ---------- bottom bars ---------- */

const TASKBAR = [
  ["Start", <><circle cx="12" cy="12" r="11" fill="#2b6c9e" stroke="#9ac4dc" /><path d="M6 8q3-2 5.500-.5l-1 4.500Q8 10.500 5 12z" fill="#e8663a" /><path d="M12.500 8q3 1.500 6 0l-1 4.500q-3 1.500-6-.5z" fill="#93c94c" /><path d="M5 13q3-1.500 5.500 0l-1 4.500Q7 16 4 17.500z" fill="#6fb7ea" /><path d="M11.500 13.500q3 1.500 6 0l-1 4.500q-3 1.500-6 0z" fill="#f7cf3f" /></>],
  ["Explorer", <><path d="M2 4h8l2 2h10v14H2z" fill="#e9d58a" /><path d="M4 7h16v6H4z" fill="#f8f0c4" /><path d="M3 13h18v7H3z" fill="#9dd0ea" /><path d="M8 16h8v6H8z" fill="#d8eefa" /></>, true],
  ["Media Player", <><path d="M6 2h16v18H6z" fill="#9ebfe4" /><path d="M3 4h15v17H3z" fill="#c6dcf3" /><circle cx="11" cy="12" r="7" fill="#ee7d28" /><path d="M9 8l6 4-6 4z" fill="#fff" /></>],
  ["Outlook", <><path d="M3 1h18v21H3z" fill="#f1b62c" /><path d="M12 7h11v12H12z" fill="#fbe7a8" /><circle cx="10" cy="10" r="5" fill="none" stroke="#fff" strokeWidth="3" /><path d="M13 9l5 5 5-5" stroke="#b37b10" fill="none" /></>],
  ["Chrome", <><circle cx="12" cy="12" r="10" fill="#f2c230" /><path d="M3.300 7A10 10 0 0 1 21 8h-9l-4 6z" fill="#d8422f" /><path d="M3.300 7A10 10 0 0 0 11 22l5-8-8 0z" fill="#3a9e4b" /><circle cx="12" cy="12" r="4.800" fill="#fff" /><circle cx="12" cy="12" r="3.800" fill="#3f7de0" /></>],
  ["Oracle", <><path d="M1 1h22v22H1z" fill="#e3131b" /><rect x="5" y="8" width="14" height="8" rx="4" fill="none" stroke="#fff" strokeWidth="2.500" /></>],
  ["Camtasia", <><path d="M1 1h22v22H1z" fill="#4f9b33" /><path d="M12 1h11v22z" fill="#7dbb55" /><path d="M17 6h-6q-3 0-3 3v6q0 3 3 3h6" fill="none" stroke="#fff" strokeWidth="3" /></>],
  ["Chess", <><path d="M1 1h22v22H1z" fill="#a9bfdf" /><path d="M8 20q1-6 0-9 0-6 4-7 4 1 4 4l-2 2q3 5 4 10z" fill="#172a52" /><path d="M19 17l3 2-3 2z" fill="#223" /></>],
];

function BottomBars() {
  return (
    <footer>
      <div className="grid h-[14px] grid-cols-[318fr_73fr_107fr_134fr_128fr_237fr_85fr_70fr] items-center border-t border-[#dfe6f0] bg-[#2b5493] pb-[3px] pl-[2px] text-[8px] leading-none text-white">
        <span>For Help, press F1</span><span>Never expire</span><span>Enough memory</span>
        <span className="whitespace-pre">{"[Filter Off]  Selected[0][1][1]"}</span><span>28/07/18</span><span>Private Project</span><span>Transactions: 1905</span><span>Administrator</span>
      </div>
      <div className="flex h-6 items-center bg-linear-to-r from-[#2a5c9c] via-[#1f4c8a] to-[#1b4079]">
        {TASKBAR.map(([name, art, on], i) => (
          <button key={name} aria-label={name} className={"mr-[7px] flex h-6 w-[35px] items-center justify-center even:w-9 " + (on ? "border border-[#a9bcd6] bg-[#8ba5c8]" : "")}>
            <svg viewBox="0 0 24 24" className={i === 0 ? "h-6 w-6" : "h-[21px] w-[21px]"}>{art}</svg>
          </button>
        ))}
        <button className="flex h-6 w-[35px] items-center justify-center border border-[#a9bcd6] bg-[#8ba5c8]">
          <span className="flex h-5 w-[26px] items-center justify-center bg-[#76bd3c] text-[8px] font-bold text-white"><span className="border-t border-white leading-[10px]">PRO</span></span>
        </button>
        <div className="ml-auto flex items-center gap-[4px] pr-4 text-white">
          <svg viewBox="0 0 6 4" className="mr-[7px] h-[3px] w-[6px]"><path d="M0 4h6L3 0z" fill="#fff" /></svg>
          <svg viewBox="0 0 10 10" className="h-[9px] w-[9px]"><path d="M1 2h8v5H1zM3 9h4" fill="#9fb8d8" stroke="#fff" /><circle cx="3" cy="7.500" r="2.200" fill="#d4202c" /></svg>
          <FaVolumeUp className="h-[9px] w-[10px]" />
          <div className="ml-[7px] text-center text-[8px] leading-[11px]">
            <div>10:22</div><div>07/03/2016</div>
          </div>
        </div>
      </div>
    </footer>
  );
}

export default function App() {
  return (
    <div className={"relative min-h-screen bg-[#0c2440] px-[63px] text-[#1c1c1c] " + UI}>
      <div className="flex min-h-screen flex-col bg-[#e3e3e3]">
        <Ribbon />
        <main className="flex flex-1">
          <ObjectsPanel />
          <div className="ml-[6px] mr-[7px] flex min-w-0 flex-1 flex-col">
            <GanttPanel />
            <Tabs items={["Support", "Gantt", "Rules"]} active={1} />
            <div className="flex h-[28px] items-center justify-between pl-0.5 pr-1 pt-[2px]">
              <h2 className="text-[12px] text-[#2d5a98]">3D Using Dates[Best] [1141x372]</h2>
              <PanelButtons />
            </div>
            <Scene />
          </div>
          <PropertiesPanel />
        </main>
        <BottomBars />
      </div>
      <ContextMenu />
    </div>
  );
}
